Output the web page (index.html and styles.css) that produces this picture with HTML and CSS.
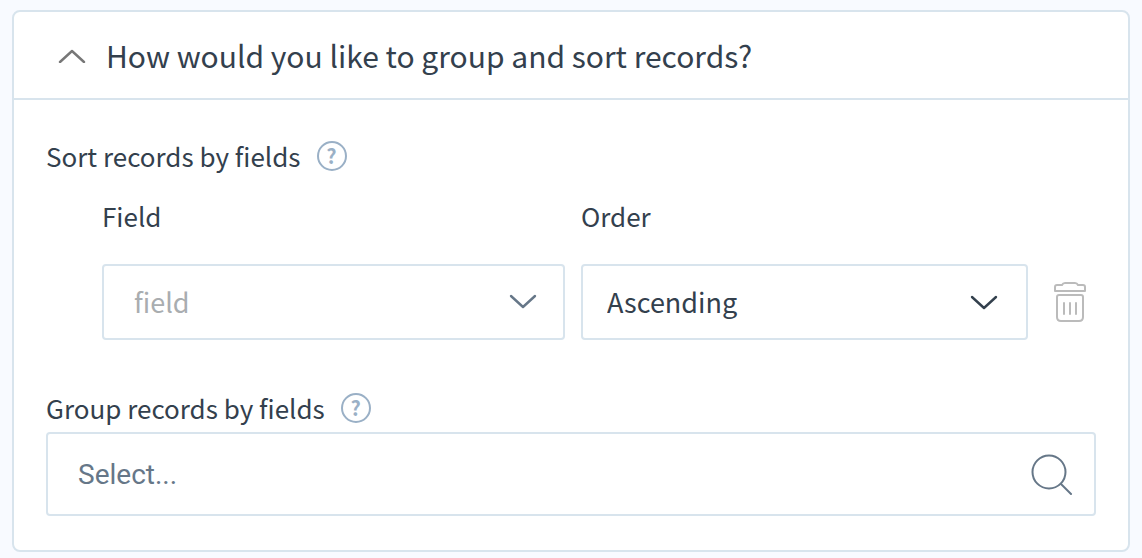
FILE: index.html
```
<!DOCTYPE html>
<html lang="en">
<head>
    <meta charset="UTF-8">
    <meta name="viewport" content="width=device-width, initial-scale=1.0">
    <title>Group and sort records</title>
    <link rel="stylesheet" href="styles.css">
</head>
<body>
    <section class="card">
        <h2 class="card-title">
            <button type="button" class="card-toggle" aria-expanded="true">
                <svg class="chevron" width="28" height="16" viewBox="0 0 28 16" aria-hidden="true">
                    <path d="M2 15 L14 4 L26 15"/>
                </svg>
                How would you like to group and sort records?
            </button>
        </h2>

        <div class="card-body">
            <div class="heading">
                <span>Sort records by fields</span>
                <button type="button" class="help" aria-label="Help with sorting">?</button>
            </div>

            <div class="sort-row">
                <div class="control">
                    <label for="field">Field</label>
                    <div class="select-box">
                        <select id="field" class="empty">
                            <option>field</option>
                        </select>
                        <svg class="chevron" width="28" height="16" viewBox="0 0 28 16" aria-hidden="true">
                            <path d="M2 2 L14 13 L26 2"/>
                        </svg>
                    </div>
                </div>
                <div class="control">
                    <label for="order">Order</label>
                    <div class="select-box dark">
                        <select id="order">
                            <option>Ascending</option>
                            <option>Descending</option>
                        </select>
                        <svg class="chevron" width="28" height="16" viewBox="0 0 28 16" aria-hidden="true">
                            <path d="M2 3 L14 14 L26 3"/>
                        </svg>
                    </div>
                </div>
                <button type="button" class="delete" aria-label="Delete">
                    <svg width="32" height="40" viewBox="0 0 32 40" aria-hidden="true">
                        <path d="M3 3 H8 Q9 1 11 1 H21 Q23 1 24 3 H29 Q31 3 31 5 V9 H1 V5 Q1 3 3 3 Z"/>
                        <path d="M5 13 H27 Q29 13 29 15 V35 Q29 39 25 39 H7 Q3 39 3 35 V15 Q3 13 5 13 Z"/>
                        <path d="M10 21 V32 M16 21 V32 M22 21 V32"/>
                    </svg>
                </button>
            </div>

            <div class="heading">
                <label for="group">Group records by fields</label>
                <button type="button" class="help" aria-label="Help with grouping">?</button>
            </div>
            <div class="search-box">
                <input type="text" id="group" placeholder="Select...">
                <svg width="42" height="42" viewBox="0 0 42 42" aria-hidden="true">
                    <circle cx="18" cy="19" r="16.5"/>
                    <path d="M30 31 L40 41"/>
                </svg>
            </div>
        </div>
    </section>
</body>
</html>
```
FILE: styles.css
```
*{
    box-sizing: border-box;
}
body{
    margin: 0;
    padding: 10px 12px 6px;
    font-family: "Noto Sans CJK SC", "Noto Sans", sans-serif;
    font-size: 26px;
    line-height: 32px;
    color: #33404d;
    background-color: #f8faff;
}
button,
input,
select{
    margin: 0;
    font: inherit;
    color: inherit;
    background: none;
    border: none;
}
button{
    padding: 0;
    cursor: pointer;
}
svg{
    flex: none;
    fill: none;
    stroke-width: 2;
    stroke-linecap: round;
    stroke-linejoin: round;
}
.card{
    background-color: white;
    border: 2px solid #d8e4ed;
    border-radius: 8px;
}
.card-title{
    margin: 0;
    border-bottom: 2px solid #d8e4ed;
    font-size: 30px;
    font-weight: 400;
}
.card-toggle{
    display: flex;
    align-items: center;
    gap: 20px;
    width: 100%;
    padding: 22px 44px;
    line-height: 42px;
    text-align: left;
}
.chevron{
    stroke: #667788;
    stroke-width: 2.4;
}
.card-toggle .chevron{
    stroke: #777777;
}
.card-body{
    padding: 40px 32px 34px;
}
.heading{
    display: flex;
    align-items: center;
    gap: 16px;
}
.help{
    width: 30px;
    height: 30px;
    border: 2px solid #9ab0c6;
    border-radius: 50%;
    color: #9ab0c6;
    font-size: 20px;
    font-weight: 700;
    line-height: 26px;
    text-align: center;
}
.sort-row{
    display: grid;
    grid-template-columns: 463fr 447fr 42px;
    column-gap: 16px;
    align-items: end;
    padding: 28px 10px 52px 56px;
}
.control label{
    display: block;
    margin-bottom: 32px;
}
.select-box,
.search-box{
    display: grid;
    align-items: center;
    border: 2px solid #d8e4ed;
    border-radius: 4px;
}
.select-box > *,
.search-box > *{
    grid-area: 1 / 1;
}
.select-box select{
    width: 100%;
    height: 72px;
    padding: 0 64px 0 24px;
    font-size: 27px;
    line-height: 44px;
    appearance: none;
}
.select-box .empty{
    padding-left: 30px;
    color: #a9adb0;
}
.select-box svg,
.search-box svg{
    justify-self: end;
    margin-right: 26px;
    pointer-events: none;
}
.dark .chevron{
    margin-right: 28px;
    stroke: #33404d;
}
.delete{
    display: flex;
    align-items: center;
    justify-content: flex-end;
    height: 76px;
}
.delete svg{
    stroke: #bbbbbb;
}
.search-box{
    margin-top: 8px;
}
.search-box input{
    width: 100%;
    height: 80px;
    padding: 0 80px 0 30px;
    font-family: Roboto, sans-serif;
    font-size: 28px;
}
.search-box input::placeholder{
    color: #667788;
}
.search-box svg{
    margin-right: 21px;
    stroke: #667788;
}
```
